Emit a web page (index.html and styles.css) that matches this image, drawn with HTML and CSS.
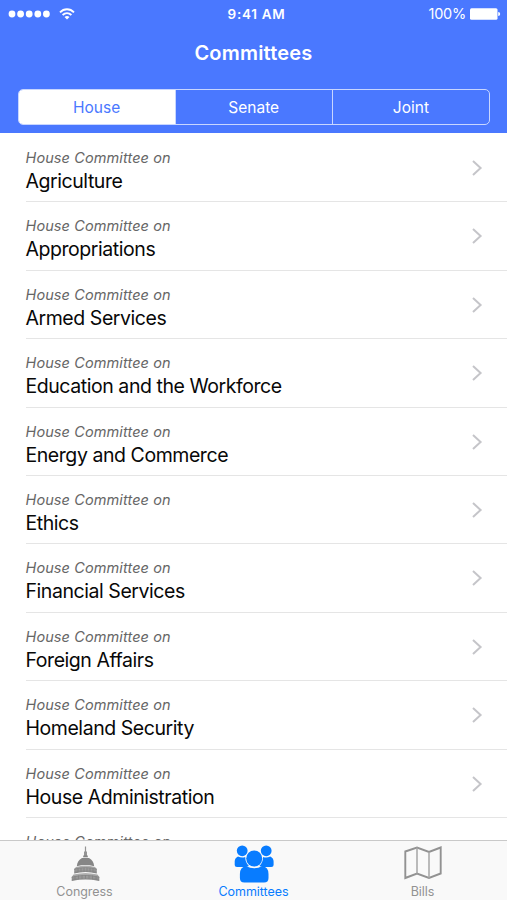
FILE: index.html
```html
<!DOCTYPE html>
<html lang="en">
<head>
<meta charset="utf-8">
<title>Committees</title>
<link rel="stylesheet" href="styles.css">
</head>
<body>
<div class="app">
  <header class="header">
    <div class="status">
      <div class="signal">
        <svg width="42" height="8" viewBox="0 0 42 8" fill="#fff"><circle cx="4" cy="4" r="3.4"/><circle cx="12.6" cy="4" r="3.4"/><circle cx="21.2" cy="4" r="3.4"/><circle cx="29.8" cy="4" r="3.4"/><circle cx="38.4" cy="4" r="3.4"/></svg>
        <svg class="wifi" width="16" height="12" viewBox="0 0 16 12" fill="none" stroke="#fff" stroke-width="1.8"><path d="M1 4.3C5 .2 11 .2 15 4.3"/><path d="M3.6 7C6.2 4.4 9.8 4.4 12.4 7"/><path d="M8 11.4 5.5 8.9Q8 6.9 10.5 8.9Z" fill="#fff" stroke="none"/></svg>
      </div>
      <div class="time">9:41 AM</div>
      <div class="power"><span>100%</span>
        <svg width="31" height="12" viewBox="0 0 31 12" fill="#fff"><rect x="0" y=".3" width="27.5" height="11.4" rx="1.5"/><path d="M28.2 4q2 .2 2 2t-2 2z"/></svg>
      </div>
    </div>
    <h1 class="title">Committees</h1>
    <div class="segments">
      <div class="segment selected">House</div>
      <div class="segment">Senate</div>
      <div class="segment">Joint</div>
    </div>
  </header>
  <main class="list">
    <div class="row"><div><p class="sub">House Committee on</p><p class="name">Agriculture</p></div><svg class="chevron" viewBox="0 0 12 18"><path d="M2 2l7.6 7L2 16"/></svg></div>
    <div class="row"><div><p class="sub">House Committee on</p><p class="name">Appropriations</p></div><svg class="chevron" viewBox="0 0 12 18"><path d="M2 2l7.6 7L2 16"/></svg></div>
    <div class="row"><div><p class="sub">House Committee on</p><p class="name">Armed Services</p></div><svg class="chevron" viewBox="0 0 12 18"><path d="M2 2l7.6 7L2 16"/></svg></div>
    <div class="row"><div><p class="sub">House Committee on</p><p class="name">Education and the Workforce</p></div><svg class="chevron" viewBox="0 0 12 18"><path d="M2 2l7.6 7L2 16"/></svg></div>
    <div class="row"><div><p class="sub">House Committee on</p><p class="name">Energy and Commerce</p></div><svg class="chevron" viewBox="0 0 12 18"><path d="M2 2l7.6 7L2 16"/></svg></div>
    <div class="row"><div><p class="sub">House Committee on</p><p class="name">Ethics</p></div><svg class="chevron" viewBox="0 0 12 18"><path d="M2 2l7.6 7L2 16"/></svg></div>
    <div class="row"><div><p class="sub">House Committee on</p><p class="name">Financial Services</p></div><svg class="chevron" viewBox="0 0 12 18"><path d="M2 2l7.6 7L2 16"/></svg></div>
    <div class="row"><div><p class="sub">House Committee on</p><p class="name">Foreign Affairs</p></div><svg class="chevron" viewBox="0 0 12 18"><path d="M2 2l7.6 7L2 16"/></svg></div>
    <div class="row"><div><p class="sub">House Committee on</p><p class="name">Homeland Security</p></div><svg class="chevron" viewBox="0 0 12 18"><path d="M2 2l7.6 7L2 16"/></svg></div>
    <div class="row"><div><p class="sub">House Committee on</p><p class="name">House Administration</p></div><svg class="chevron" viewBox="0 0 12 18"><path d="M2 2l7.6 7L2 16"/></svg></div>
    <div class="row"><div><p class="sub">House Committee on</p></div></div>
  </main>
  <nav class="tabs">
    <div class="tab">
      <svg width="30" height="37" viewBox="0 0 30 37">
        <defs><linearGradient id="tier" x1="0" y1="0" x2="0" y2="1"><stop offset="0" stop-color="#b5b5b5"/><stop offset="1" stop-color="#818181"/></linearGradient></defs>
        <path d="M14.9 1.500h1.200v4.500l.9 1v4h-3v-4l.9-1z" fill="#949494"/>
        <path d="M13.200 10.500h4.600v1.800h-4.600z" fill="#858585"/>
        <path d="M12 13h7c3.200 1.600 4.800 4.500 5.200 8.200q-8.700-2.400-17.400 0C7.200 17.500 8.800 14.600 12 13z" fill="#868686"/>
        <path d="M6 22q9.500-3 19 0l1.800 2v4.500q-11.300-3-22.600 0V24z" fill="url(#tier)"/>
        <path d="M3.500 29.500q12-3 24 0l1.800 2.500v4q-13.800-2.800-27.600 0v-4z" fill="url(#tier)"/>
        <path d="M8 24v3M11 23v4M14 23v4M17 23v4M20 23v4M23 24v3M5 31v4M8.500 30.500v4M12 30v4M15.500 30v4M19 30v4M22.500 30.500v4M26 31v4" stroke="#858585" stroke-width=".9"/>
        <path d="M4.200 24.300q11.300-3.200 22.600 0M1.700 32.300q13.800-3.500 27.600 0" fill="none" stroke="#858585" stroke-width=".9"/>
      </svg>
      <span>Congress</span>
    </div>
    <div class="tab active">
      <svg width="40" height="38" viewBox="0 0 40 38" fill="#087cff"><circle cx="8.2" cy="5.8" r="5.4"/><circle cx="32.2" cy="5.8" r="5.4"/><path d="M4 11.5q4 2 7.2.4.1 5.6 3.7 9L11.700 22H3Q.7 22 .7 20v-3.500Q.7 13 4 11.500zM36.300 11.500q-4 2-7.200.4-.1 5.600-3.700 9l3.200 1.100h8.700q2.300 0 2.300-2v-3.500q0-3.500-3.300-5z"/><circle cx="20.200" cy="13.500" r="8"/><path d="M12 21q8.200 4.500 16.400 0 6.100 1 6.100 8v4q0 4.500-4.500 4.500H10.400Q5.900 37.500 5.900 33v-4q0-7 6.100-8z"/></svg>
      <span>Committees</span>
    </div>
    <div class="tab">
      <svg width="38" height="35" viewBox="0 0 38 35" fill="none" stroke="#929292" stroke-width="1.9" stroke-linejoin="miter"><path d="M1.300 6.500 13 2.500l12 4.500L36.700 2.500v26L25 33l-12-4.500L1.300 33z"/><path d="M13 2.500v26M25 7v26" stroke="#a5a5a5" stroke-width="1.5"/></svg>
      <span>Bills</span>
    </div>
  </nav>
</div>
</body>
</html>
```
FILE: styles.css
```css
* { box-sizing: border-box; }
body { margin: 0; font-family: Inter, "Liberation Sans", sans-serif; background: #fff; }
p, h1 { margin: 0; }
svg { display: block; flex: none; }
.app { width: 507px; height: 900px; display: flex; flex-direction: column; overflow: hidden; }
.header { height: 133px; flex: none; background: #4a78ff; color: #fff; }
.status { height: 27px; padding: 0 6px 0 8px; display: grid; grid-template-columns: 1fr auto 1fr; align-items: center; }
.signal { display: flex; align-items: center; gap: 9px; }
.time { font-size: 13.5px; font-weight: 600; letter-spacing: .7px; padding: 1px 0 0 4px; }
.power { display: flex; justify-content: flex-end; align-items: center; gap: 4px; font-size: 14.5px; letter-spacing: -.25px; }
.title { height: 62px; padding-top: 14px; text-align: center; font-size: 20px; line-height: 24px; font-weight: 600; letter-spacing: .2px; }
.segments { width: 472.5px; height: 36px; margin-left: 17.5px; display: flex; border: 1.5px solid #c8d6ff; border-radius: 5px; overflow: hidden; }
.segment { flex: 1; display: flex; align-items: center; justify-content: center; font-size: 15.5px; letter-spacing: 0; }
.segment + .segment { border-left: 1.5px solid #c8d6ff; }
.segment.selected { background: #fff; color: #4a78ff; }
.list { flex: 1; min-height: 0; overflow: hidden; padding-top: 1px; }
.row { height: 68.4px; margin-left: 25.5px; padding: 14px 24px 0 0; display: flex; justify-content: space-between; border-bottom: 1px solid #e5e5e5; }
.sub { font-size: 14.5px; line-height: 20px; font-style: italic; color: #666; letter-spacing: .1px; }
.name { font-size: 19.5px; line-height: 26px; color: #080808; white-space: nowrap; letter-spacing: -.44px; }
.chevron { width: 12px; height: 18px; margin-top: 11px; fill: none; stroke: #c5c5c9; stroke-width: 2; }
.tabs { height: 60px; flex: none; display: grid; grid-template-columns: repeat(3, 1fr); background: #f9f9f9; border-top: 1px solid #c9c9c9; }
.tab { display: flex; flex-direction: column; align-items: center; justify-content: space-between; padding: 4px 0 0; color: #929292; font-size: 12.5px; line-height: 17px; letter-spacing: -.05px; }
.tab.active { color: #087cff; }
```
